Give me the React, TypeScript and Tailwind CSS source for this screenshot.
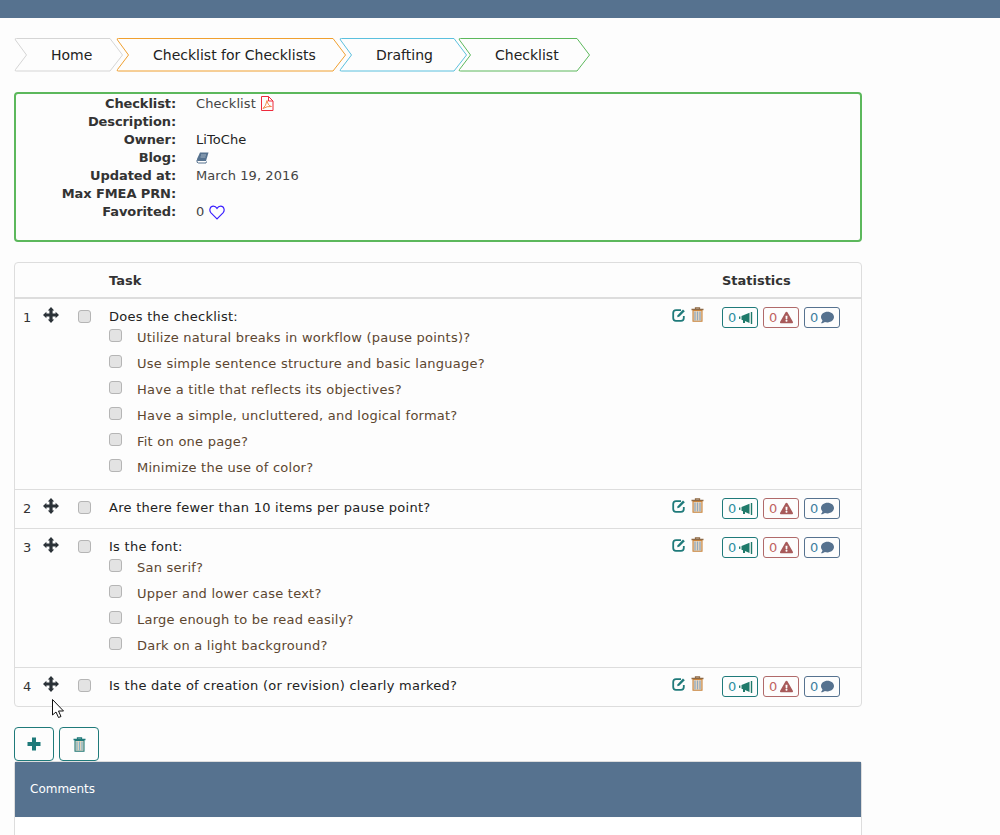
import React from "react";
import { FaExclamationTriangle, FaComment } from "react-icons/fa";

function Crumb({ label, width, color, ml, pl }: { label: string; width: number; color: string; ml: string; pl: string }) {
  const w = width - 1;
  const d = `M2.5 .5 H${w - 13} L${w - 0.5} 17 L${w - 13} 33 H2.5 Q.2 33 1.5 31.5 L12.5 17 L1.5 2 Q.2 .5 2.5 .5 Z`;
  return (
    <div className={`relative h-[34px] shrink-0 flex items-center ${ml} ${pl}`} style={{ width }}>
      <svg className="absolute inset-0" width={width} height={34} fill="none" stroke={color} strokeWidth="1"><path d={d} /></svg>
      <span className="relative text-[14px] text-[#222]">{label}</span>
    </div>
  );
}

function Trash({ className, stroke = "#8f6a45", a = "#c8843c", b = "#8fa9bf" }: { className?: string; stroke?: string; a?: string; b?: string }) {
  return (
    <svg className={className} viewBox="0 0 13 15" width="13" height="15">
      <path d="M4.5 2 V.8 H8.5 V2 M.5 2.5 H12.5" stroke={stroke} strokeWidth="1.3" fill="none" />
      <path d="M2 3.5 H11 V14.3 H2 Z" fill="#f0d8bc" stroke={a} strokeWidth="1.1" />
      <path d="M4 4.5 V13.5 M6.5 4.5 V13.5 M9 4.5 V13.5" stroke={b} strokeWidth="1.3" />
    </svg>
  );
}

function Edit() {
  return (
    <svg viewBox="0 0 14 14" width="14" height="14" fill="none" stroke="#1f7a7a">
      <path d="M9 2.2 H4 Q1.2 2.2 1.2 5 V10 Q1.2 12.8 4 12.8 H9 Q11.8 12.8 11.8 10 V8" strokeWidth="1.8" />
      <path d="M5.2 9.2 L5.6 7.2 L11 1.6 L12.8 3.3 L7.2 8.8 Z" fill="#1f7a7a" stroke="none" />
    </svg>
  );
}

function Move() {
  return (
    <svg viewBox="0 0 16 16" width="16" height="16" fill="#2b3238">
      <path d="M8 0 L11.2 3.4 H9.6 V6.4 H12.6 V4.8 L16 8 L12.6 11.2 V9.6 H9.6 V12.6 H11.2 L8 16 L4.8 12.6 H6.4 V9.6 H3.4 V11.2 L0 8 L3.4 4.8 V6.4 H6.4 V3.4 H4.8 Z" />
    </svg>
  );
}

function Horn() {
  return (
    <svg viewBox="0 0 14 12" width="14" height="12" fill="#1f7a6a">
      <rect x="0" y="4.5" width="1.4" height="2.4" />
      <path d="M2.5 4 L10.5 .8 V11 L6 9 V11 H4 V8.2 L2.5 7.8 Z" />
      <rect x="11.8" y="0" width="1.4" height="12" />
    </svg>
  );
}

function Pdf() {
  return (
    <svg className="-mt-[2px]" viewBox="0 0 14 15" width="14" height="15" fill="none" stroke="#ee2a3c" strokeWidth="1">
      <path d="M1.5 .5 H8.5 L13 5 V14.5 H1.5 Z M8.5 .5 V5 H13" />
      <path d="M3 12.5 Q6 10 7 4.5 Q8 10 11.5 10.5 Q7 10 3 12.5 Z" stroke="#f0803c" strokeWidth=".9" />
    </svg>
  );
}

function BlogBook() {
  return (
    <svg viewBox="0 0 13 12" width="13" height="12">
      <path d="M4 .5 H12.5 L10 9 H2 Q.4 9 1 7 Z" fill="#56728f" />
      <path d="M1 8 Q.4 11 2.5 11 H10 L10.5 9.5" fill="none" stroke="#56728f" strokeWidth="1" />
      <path d="M5 3 H10 M4.5 5 H9.5" stroke="#c9d4de" strokeWidth=".7" />
    </svg>
  );
}

function Heart() {
  return (
    <svg viewBox="0 0 16 15" width="16" height="15" fill="none" stroke="#3a1fff" strokeWidth="1.2">
      <path d="M8 13.8 L2 7.8 C-.2 5.4 1 1.2 4.3 1.2 C6 1.2 7.3 2.2 8 3.4 C8.7 2.2 10 1.2 11.7 1.2 C15 1.2 16.2 5.4 14 7.8 Z" />
    </svg>
  );
}

function Plus() {
  return (
    <svg viewBox="0 0 14 14" width="14" height="14" fill="#1f7a7a">
      <path d="M5 .5 H9 V5 H13.5 V9 H9 V13.5 H5 V9 H.5 V5 H5 Z" />
    </svg>
  );
}

function Box({ className = "" }: { className?: string }) {
  return <span className={`block w-[13px] h-[13px] rounded-[3px] border border-[#b5b5b5] bg-[#e3e3e3] shrink-0 ${className}`} />;
}

function Stat({ children, cls }: { children: React.ReactNode; cls: string }) {
  return <span className={`flex items-center w-[36px] h-[21px] rounded-[3px] border pl-[5px] gap-[3px] text-[13px] leading-none ${cls}`}>{children}</span>;
}

function Row({ n, title, subs, h }: { n: number; title: string; subs?: string[]; h: string }) {
  return (
    <div className={`flex ${h} border-b border-[#ddd] last:border-b-0`}>
      <div className="w-[28px] pl-[8px] pt-[10px] text-[13px] leading-[18px] text-[#333]">{n}</div>
      <div className="w-[35px] pt-[8px]"><Move /></div>
      <div className="w-[31px] pt-[11px]"><Box /></div>
      <div className="w-[563px] pt-[9px]">
        <div className="text-[13px] leading-[18px] text-[#222] tracking-[0.27px]">{title}</div>
        {subs && (
          <div className="flex flex-col">
            {subs.map((s) => (
              <div key={s} className="flex h-[26px]">
                <Box className="mt-[3px]" />
                <span className="ml-[15px] mt-[3px] text-[13px] leading-[18px] text-[#5c4630] tracking-[0.24px]">{s}</span>
              </div>
            ))}
          </div>
        )}
      </div>
      <div className="w-[50px] pt-[9px] flex gap-[5px] items-start">
        <Edit />
        <Trash className="-mt-[1px]" />
      </div>
      <div className="pt-[8px] flex gap-[5px] items-start">
        <Stat cls="border-[#1f7a7a] text-[#2f8f9f]">0<Horn /></Stat>
        <Stat cls="border-[#b06a6a] text-[#c0645f]">0<FaExclamationTriangle className="text-[#a85a5a] text-[13px]" /></Stat>
        <Stat cls="border-[#56728f] text-[#3f7f9f]">0<FaComment className="text-[#56728f] text-[13px]" /></Stat>
      </div>
    </div>
  );
}

const Info = ({ k, children }: { k: string; children?: React.ReactNode }) => (
  <div className="flex h-[18px] leading-[18px] text-[13px]">
    <div className="w-[160px] text-right font-bold text-[#333] tracking-[-0.1px]">{k}:</div>
    <div className="ml-[20px] flex items-center gap-[4px] text-[#444] tracking-[0.08px]">{children}</div>
  </div>
);

export default function App() {
  return (
    <div className="h-[835px] overflow-hidden bg-[#fdfdfd] relative" style={{ fontFamily: '"DejaVu Sans", sans-serif' }}>
      <div className="h-[18px] bg-[#56728f]" />
      <div className="pl-[14px] pt-[20px] flex">
        <Crumb label="Home" width={110} color="#d5d5d5" ml="" pl="pl-[37px]" />
        <Crumb label="Checklist for Checklists" width={231} color="#f0a030" ml="-ml-[8px]" pl="pl-[37px]" />
        <Crumb label="Drafting" width={129} color="#5bc0de" ml="-ml-[8px]" pl="pl-[37px]" />
        <Crumb label="Checklist" width={133} color="#5cb85c" ml="-ml-[10px]" pl="pl-[37px]" />
      </div>
      <div className="ml-[14px] mt-[20px] w-[848px] h-[150px] border-2 border-[#5cb85c] rounded-[4px] pt-[1px]">
        <Info k="Checklist">Checklist <Pdf /></Info>
        <Info k="Description" />
        <Info k="Owner"><span className="text-[#222]">LiToChe</span></Info>
        <Info k="Blog"><BlogBook /></Info>
        <Info k="Updated at">March 19, 2016</Info>
        <Info k="Max FMEA PRN" />
        <Info k="Favorited">0 <span className="ml-[1px]"><Heart /></span></Info>
      </div>
      <div className="ml-[14px] mt-[20px] w-[848px] border border-[#ddd] rounded-[4px]">
        <div className="flex h-[36px] pt-[1px] border-b-2 border-[#ddd] items-center font-bold text-[13px] text-[#333] tracking-[-0.02px]">
          <div className="ml-[94px] w-[613px]">Task</div>
          <div>Statistics</div>
        </div>
        <Row n={1} h="h-[191px]" title="Does the checklist:" subs={["Utilize natural breaks in workflow (pause points)?", "Use simple sentence structure and basic language?", "Have a title that reflects its objectives?", "Have a simple, uncluttered, and logical format?", "Fit on one page?", "Minimize the use of color?"]} />
        <Row n={2} h="h-[39px]" title="Are there fewer than 10 items per pause point?" />
        <Row n={3} h="h-[139px]" title="Is the font:" subs={["San serif?", "Upper and lower case text?", "Large enough to be read easily?", "Dark on a light background?"]} />
        <Row n={4} h="h-[38px]" title="Is the date of creation (or revision) clearly marked?" />
      </div>
      <div className="ml-[14px] mt-[20px] flex gap-[5px]">
        <button className="w-[40px] h-[34px] border border-[#1f7a7a] rounded-[4px] flex items-center justify-center"><Plus /></button>
        <button className="w-[40px] h-[34px] border border-[#1f7a7a] rounded-[4px] flex items-center justify-center"><Trash stroke="#1f7a7a" a="#1f7a7a" b="#7fb5c8" /></button>
      </div>
      <div className="ml-[14px] w-[848px] border border-[#ddd] rounded-t-[3px]">
        <div className="h-[55px] bg-[#56728f] flex items-center pl-[15px] pb-[2px] text-[12px] text-white">Comments</div>
        <div className="h-[40px] mt-[1px] bg-white" />
      </div>
      <svg className="absolute left-[52px] top-[699px]" width="14" height="20" viewBox="0 0 14 20"><path d="M.5 .5 V16 L4 13 L6.5 18.5 L9 17.5 L6.5 12 H11.5 Z" fill="#fff" stroke="#111" strokeWidth="1" /></svg>
    </div>
  );
}
